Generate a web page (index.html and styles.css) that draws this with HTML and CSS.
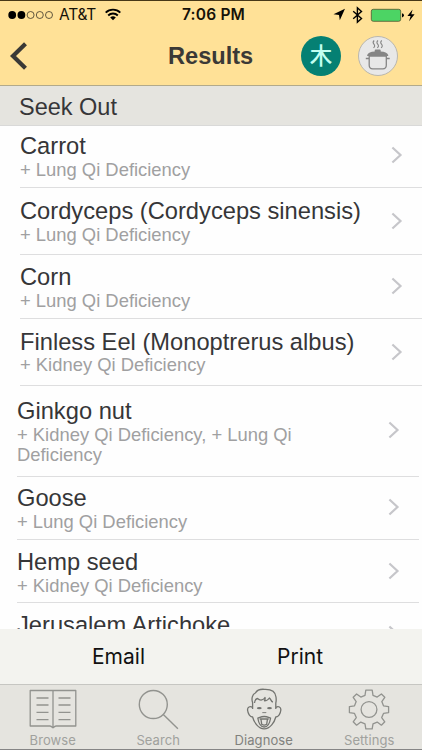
FILE: index.html
```html
<!DOCTYPE html>
<html lang="en">
<head>
<meta charset="utf-8">
<title>Results</title>
<link rel="stylesheet" href="styles.css">
</head>
<body>
<svg class="defs" aria-hidden="true">
  <symbol id="chevron" viewBox="0 0 12 18"><path d="M1.400 1.500 9.500 9l-8.100 7.500" fill="none" stroke="#c6c6ca" stroke-width="2.200"/></symbol>
</svg>
<div class="screen">
  <header class="top">
    <div class="status">
      <svg class="signal" viewBox="0 0 46 10"><g fill="#000"><circle cx="4.200" cy="5" r="3.900"/><circle cx="13.400" cy="5" r="3.900"/></g><g fill="none" stroke="#3a3427" stroke-width=".8"><circle cx="22.600" cy="5" r="3.500"/><circle cx="31.800" cy="5" r="3.500"/><circle cx="41" cy="5" r="3.500"/></g></svg>
      <span class="carrier">AT&amp;T</span>
      <svg class="wifi" viewBox="0 0 16 12"><g fill="none" stroke="#000" stroke-width="1.900"><path d="M.7 4.200a10.300 10.300 0 0 1 14.600 0"/><path d="M3.200 7a6.800 6.800 0 0 1 9.600 0"/></g><path d="M5.200 9a4 4 0 0 1 5.600 0L8 11.800z"/></svg>
      <span class="time">7:06 PM</span>
      <svg class="indicators" viewBox="0 0 84 20">
        <path d="M.5 9.300 12 3.800 6.800 15.200 6 10z"/>
        <path d="M20.200 6.300 28.500 13.500 24.400 17.200V2.800L28.500 6.500 20.200 13.700" fill="none" stroke="#000" stroke-width="1.400"/>
        <rect x="38.300" y="4.300" width="29.400" height="12" rx="2" fill="#4cd464" stroke="#4f5630" stroke-width=".8"/>
        <path d="M69 8.200q2 .5 2 2.100t-2 2.100z"/>
        <path d="M79.600 4.500 74.400 11h3.200l-1.500 5.200 5.500-7h-3.300z"/>
      </svg>
    </div>
    <div class="nav">
      <svg class="back" viewBox="0 0 18 30"><path d="M16.500 2.800 4 15 16.500 27.200" fill="none" stroke="#3a3936" stroke-width="4.200"/></svg>
      <h1>Results</h1>
      <div class="badge wood">木</div>
      <div class="badge pot">
        <svg viewBox="0 0 40 40"><g fill="none" stroke="#858585" stroke-width="1.300"><path d="M11.200 20v9.300q0 3.500 3.500 3.500h10.100q3.500 0 3.500-3.500V20zM7.800 22.500h3.400M28.300 22.500h3.400"/><path d="M16.200 4.500q-2 1.700-.3 3.700t-.4 3.700M20 4.500q-2 1.700-.3 3.700t-.4 3.700M23.800 4.500q-2 1.700-.3 3.700t-.4 3.700" stroke-width="1.100"/></g><path d="M9.200 19q1.500-3 7.500-3.400v-1q0-1 1-1h4q1 0 1 1v1q6 .4 7.500 3.400v.9h-21z" fill="#858585"/></svg>
      </div>
    </div>
  </header>
  <h2>Seek Out</h2>
  <main class="list">
    <div class="row r1"><div><h3>Carrot</h3><p>+ Lung Qi Deficiency</p></div><svg class="chev"><use href="#chevron"/></svg></div>
    <div class="row r2"><div><h3>Cordyceps (Cordyceps sinensis)</h3><p>+ Lung Qi Deficiency</p></div><svg class="chev"><use href="#chevron"/></svg></div>
    <div class="row r3"><div><h3>Corn</h3><p>+ Lung Qi Deficiency</p></div><svg class="chev"><use href="#chevron"/></svg></div>
    <div class="row r4"><div><h3>Finless Eel (Monoptrerus albus)</h3><p>+ Kidney Qi Deficiency</p></div><svg class="chev"><use href="#chevron"/></svg></div>
    <div class="row inset r5"><div><h3>Ginkgo nut</h3><p>+ Kidney Qi Deficiency, + Lung Qi<br>Deficiency</p></div><svg class="chev"><use href="#chevron"/></svg></div>
    <div class="row inset r6"><div><h3>Goose</h3><p>+ Lung Qi Deficiency</p></div><svg class="chev"><use href="#chevron"/></svg></div>
    <div class="row inset r7"><div><h3>Hemp seed</h3><p>+ Kidney Qi Deficiency</p></div><svg class="chev"><use href="#chevron"/></svg></div>
    <div class="row inset r8"><div><h3>Jerusalem Artichoke</h3></div><svg class="chev"><use href="#chevron"/></svg></div>
  </main>
  <div class="actions"><span>Email</span><span>Print</span></div>
  <nav class="tabs">
    <div class="tab"><svg viewBox="0 0 48 44"><g fill="none" stroke="#92938f" stroke-width="1.300"><path d="M1.200 5.500h45.600V41H27q-1 0-3 1.800Q22 41 21 41H1.200zM24 5.500v37" stroke-linejoin="round"/><path d="M7.500 13h12M7.500 20h12M7.500 27.300h12M7.500 34.600h12M29.500 13h12M29.500 20h12M29.500 27.300h12M29.500 34.600h12"/></g></svg><span>Browse</span></div>
    <div class="tab"><svg viewBox="0 0 48 44"><g fill="none" stroke="#92938f" stroke-width="1.400"><circle cx="19.300" cy="19.500" r="14"/><path d="m29.300 29.500 14.600 14.300"/></g></svg><span>Search</span></div>
    <div class="tab active"><svg viewBox="0 0 48 44"><g fill="none" stroke="#737470" stroke-width="1.300" stroke-linejoin="round"><path d="M12.600 22.500c-2.500-1.700-5.400-.5-5 2.800.3 3.200 2.300 6.500 5 6.700 1.300 5.200 5.700 11.800 11.600 11.800S34.500 37.200 35.800 32c2.700-.2 4.700-3.500 5-6.700.4-3.300-2.500-4.500-5-2.800"/><path d="M12.600 24v-6.500c-1.300-3.500-.4-8.300 2.800-9.500C17 5 21 4 24.500 4.300c5.500-.2 11 1.700 11.500 7.700.3 2.500.4 4-.2 6V24M14.500 18c.3-3 1.500-4.200 3-4.500 3 2.700 6 1.500 7.500-1 .5 2-.3 2.800-.6 3.300 2.600 0 4-1.300 5-2.800 1.500 1.200 1.600 3.400 3.500 4.200"/><path d="M17.800 33c1.700-.5 3.400-1.500 6.400-1.500s4.700 1 6.400 1.500c-.7 4.500-2.300 9-6.400 9s-5.700-4.500-6.400-9zM19.700 34h9M21 34.500l.7 4.700q2.500 1.800 5 0l.7-4.700"/></g><g fill="#737470"><ellipse cx="19.300" cy="23.200" rx="2.400" ry="1.100"/><ellipse cx="29.500" cy="23.200" rx="2.400" ry="1.100"/><path d="M22.300 27.200h4v.9h-4z"/></g></svg><span>Diagnose</span></div>
    <div class="tab"><svg viewBox="0 0 48 44"><g fill="none" stroke="#92938f" stroke-width="1.300" stroke-linejoin="round"><circle cx="24" cy="24.500" r="7.900"/><path d="M20.800 5.200h6.400l.8 5.100 4.200 1.800 4.200-3.100 3.400 3.300-3 4.300 1.700 4.200 5.100.8v6l-5.100.8-1.800 4.200 3.100 4.200-3.400 3.400-4.200-3.100-4.200 1.800-.8 5h-6.400l-.8-5-4.200-1.800-4.200 3.100-3.400-3.400 3.100-4.200-1.800-4.200-5.100-.8v-6l5.100-.8 1.700-4.200-3-4.300 3.400-3.300 4.200 3.100 4.200-1.800z"/></g></svg><span>Settings</span></div>
  </nav>
</div>
</body>
</html>
```
FILE: styles.css
```css
* { box-sizing: border-box; margin: 0; padding: 0; }
body { width: 422px; height: 750px; overflow: hidden; background: #fefefe; font-family: "Liberation Sans", Arial, sans-serif; color: #363638; }
h1, h2, h3 { font-weight: 400; }
svg { display: block; flex: none; }
.defs { position: absolute; width: 0; height: 0; }
.screen { height: 750px; display: flex; flex-direction: column; }
.top { height: 86px; flex: none; background: #ffe197; border-top: 1px solid #473817; border-bottom: 1px solid #b2aa8b; }
.status { height: 27px; display: flex; align-items: center; padding-left: 8px; font-family: Inter, sans-serif; color: #151208; line-height: 27px; }
.signal { width: 46px; height: 10px; }
.carrier { width: 38px; margin-left: 5px; font-size: 15.5px; letter-spacing: -.2px; white-space: nowrap; }
.wifi { width: 16px; height: 13px; margin-left: 8px; }
.time { width: 66px; margin-left: 61px; font-size: 15.5px; font-weight: 600; white-space: nowrap; letter-spacing: .2px; }
.indicators { width: 84px; height: 20px; margin-left: 85px; }
.nav { height: 55px; display: flex; align-items: center; padding-left: 9px; }
.back { width: 18px; height: 30px; }
h1 { width: 90px; margin-left: 141px; font-size: 23.6px; font-weight: 700; color: #3b3936; line-height: 28px; }
.badge { width: 40px; height: 40px; border-radius: 50%; flex: none; }
.wood { margin-left: 43px; background: #058073; color: #c1fff1; font: 500 22.5px/36px "Noto Sans CJK SC", sans-serif; text-align: center; }
.pot { margin-left: 17px; background: #e8e8e8; border: 1px solid #bab7ae; }
.pot svg { width: 40px; height: 40px; margin: -1px; }
h2 { height: 40px; flex: none; padding-left: 19px; font-size: 23.5px; line-height: 42px; background: #e5e4df; border-bottom: 1px solid #d9d9d8; }
.list { height: 503px; flex: none; overflow: hidden; }
.row { display: flex; justify-content: space-between; align-items: center; margin-left: 20px; padding-right: 19px; border-bottom: 1px solid #dededf; }
.row > div { align-self: flex-start; white-space: nowrap; }
.inset { margin-left: 17px; margin-right: 3px; }
h3 { font-size: 23.7px; line-height: 26px; }
p { margin-top: 1px; font-size: 18.4px; line-height: 20.4px; color: #a0a0a1; }
.chev { width: 12px; height: 18px; }
.row .chev { margin-top: -10px; }
.r1 { height: 62px; padding-top: 7px; }
.r2 { height: 67px; padding-top: 10px; }
.r3 { height: 64px; padding-top: 9px; }
.r4 { height: 67px; padding-top: 10px; }
.r4 p { margin-top: 0; }
.r5 { height: 91px; padding-top: 12px; }
.r6 { height: 63px; padding-top: 8px; }
.r7 { height: 63px; padding-top: 9px; }
.r8 { height: 63px; padding-top: 9px; }
.row.r5 .chev { margin-top: -14px; }
.actions { height: 55px; flex: none; display: flex; background: #f3f3ef; font: 400 21px/55px Inter, sans-serif; color: #111; }
.actions span:first-child { width: 185px; padding-left: 92px; }
.actions span:last-child { padding-left: 92px; }
.tabs { height: 66px; flex: none; display: grid; grid-template-columns: repeat(4, 105.5px); background: #e5e4df; border-top: 1px solid #c6c6c2; border-bottom: 1px solid #858585; }
.tab { display: flex; flex-direction: column; align-items: center; color: #a0a19d; font: 400 13px/18px Inter, sans-serif; letter-spacing: .1px; }
.tab svg { width: 48px; height: 44px; overflow: visible; }
.tab span { margin-top: 2px; }
.active { color: #80817d; }
```
